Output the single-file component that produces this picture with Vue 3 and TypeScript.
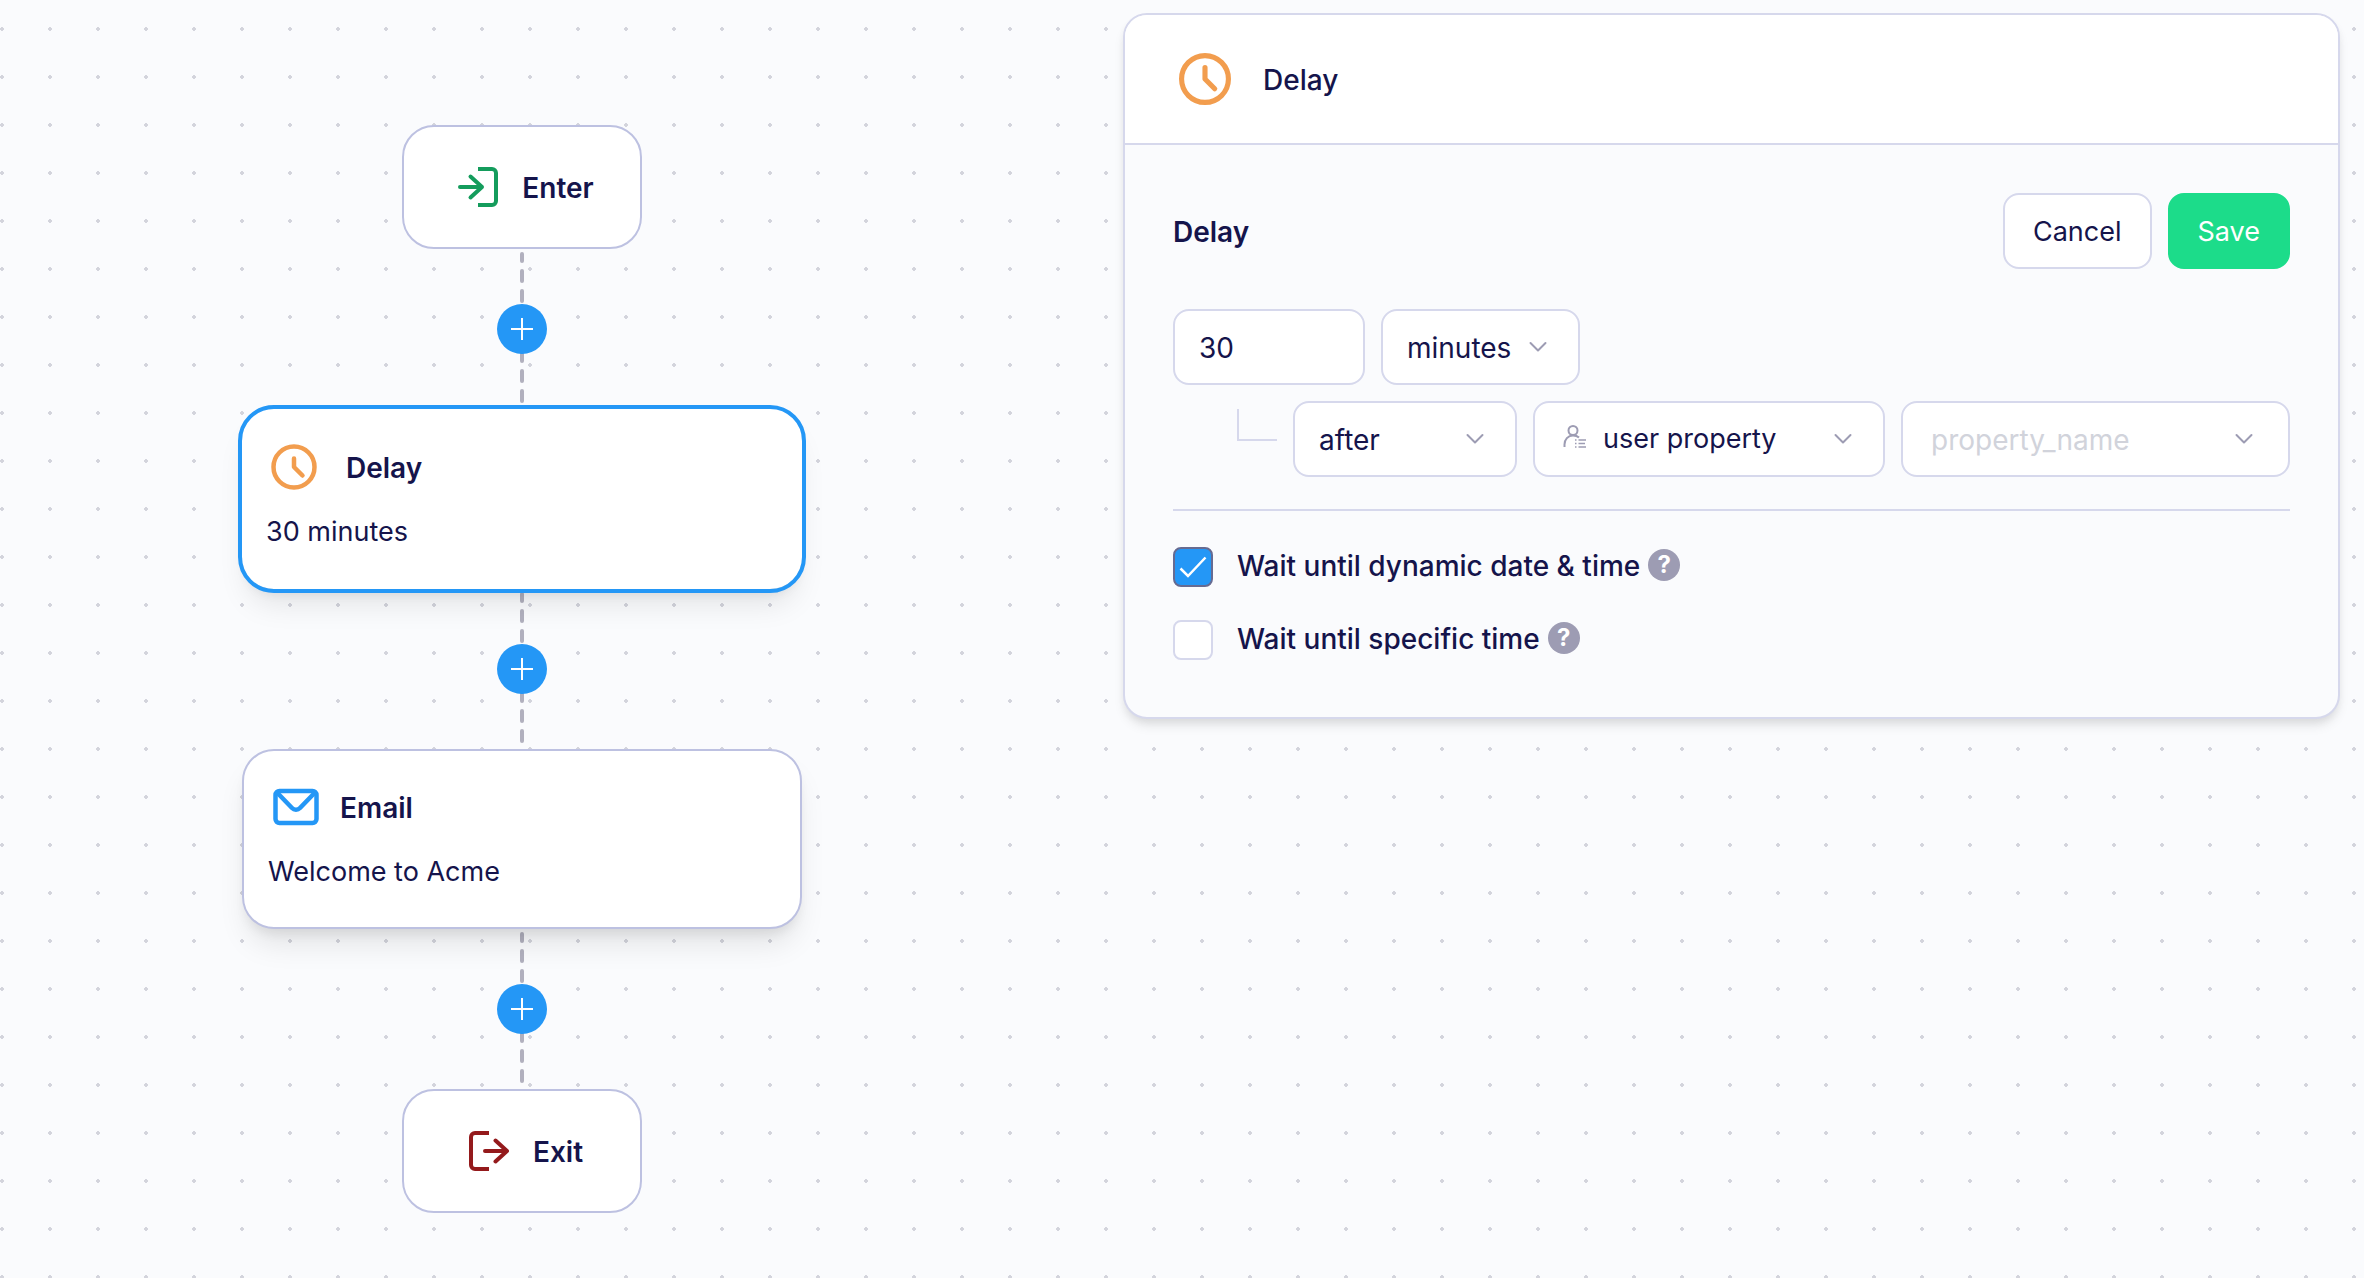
<script setup lang="ts">
import { reactive } from 'vue'

interface DelaySettings {
  amount: string
  unit: string
  relation: string
  source: string
  property: string
  untilDynamic: boolean
  untilSpecific: boolean
}

const settings = reactive<DelaySettings>({
  amount: '30',
  unit: 'minutes',
  relation: 'after',
  source: 'user property',
  property: '',
  untilDynamic: true,
  untilSpecific: false,
})
</script>

<template>
  <main class="workspace">
    <section class="flow" aria-label="Journey">
      <article class="node terminal">
        <svg class="terminal-icon enter" viewBox="0 0 48 48" aria-hidden="true">
          <path d="M28 6h14a4 4 0 0 1 4 4v28a4 4 0 0 1-4 4H28" />
          <path class="round" d="M10 24h22M20.500 13.500L32 24 20.500 34.500" />
        </svg>
        <h2>Enter</h2>
      </article>

      <div class="edge">
        <svg class="wire" viewBox="0 0 4 160" aria-hidden="true"><path d="M2 5V153" /></svg>
        <button type="button" class="add" aria-label="Add step after Enter">
          <svg viewBox="0 0 22 22" aria-hidden="true"><path d="M11 0v22M0 11h22" /></svg>
        </button>
      </div>

      <article class="node step selected">
        <div class="step-title wide">
          <svg class="clock" viewBox="0 0 56 56" aria-hidden="true">
            <circle cx="28" cy="28" r="20.500" />
            <path d="M28 19.500V28l8.500 8.500" />
          </svg>
          <h2>Delay</h2>
        </div>
        <p>30 minutes</p>
      </article>

      <div class="edge">
        <svg class="wire" viewBox="0 0 4 160" aria-hidden="true"><path d="M2 5V153" /></svg>
        <button type="button" class="add" aria-label="Add step after Delay">
          <svg viewBox="0 0 22 22" aria-hidden="true"><path d="M11 0v22M0 11h22" /></svg>
        </button>
      </div>

      <article class="node step">
        <div class="step-title">
          <svg class="mail" viewBox="0 0 56 56" aria-hidden="true">
            <rect x="7.500" y="12" width="41" height="32" rx="4" />
            <path d="M9 13.500l15 15.500a5.500 5.500 0 0 0 8 0l15-15.500" />
          </svg>
          <h2>Email</h2>
        </div>
        <p>Welcome to Acme</p>
      </article>

      <div class="edge">
        <svg class="wire" viewBox="0 0 4 160" aria-hidden="true"><path d="M2 5V153" /></svg>
        <button type="button" class="add" aria-label="Add step after Email">
          <svg viewBox="0 0 22 22" aria-hidden="true"><path d="M11 0v22M0 11h22" /></svg>
        </button>
      </div>

      <article class="node terminal">
        <svg class="terminal-icon exit" viewBox="0 0 48 48" aria-hidden="true">
          <path d="M28 6H14a4 4 0 0 0-4 4v28a4 4 0 0 0 4 4h14" />
          <path class="round" d="M24 24h22M34.500 13.500L46 24 34.500 34.500" />
        </svg>
        <h2>Exit</h2>
      </article>
    </section>

    <aside class="panel" aria-label="Delay settings">
      <header class="panel-header">
        <svg class="clock" viewBox="0 0 56 56" aria-hidden="true">
          <circle cx="28" cy="28" r="20.500" />
          <path d="M28 18v10l8.500 8.500" />
        </svg>
        <h1>Delay</h1>
      </header>

      <form class="panel-body" @submit.prevent>
        <div class="section-bar">
          <h2>Delay</h2>
          <div class="actions">
            <button type="button" class="btn">Cancel</button>
            <button type="submit" class="btn primary">Save</button>
          </div>
        </div>

        <div class="duration">
          <input v-model="settings.amount" class="control" type="text" inputmode="numeric" aria-label="Amount" />
          <div class="picker">
            <select v-model="settings.unit" class="control" aria-label="Unit">
              <option>minutes</option>
              <option>hours</option>
              <option>days</option>
            </select>
            <svg class="chevron" viewBox="0 0 20 12" aria-hidden="true"><path d="M2.500 2l7.500 7.500L17.500 2" /></svg>
          </div>
        </div>

        <div class="anchor">
          <span class="branch"></span>
          <div class="picker">
            <select v-model="settings.relation" class="control" aria-label="Relation">
              <option>after</option>
              <option>before</option>
            </select>
            <svg class="chevron" viewBox="0 0 20 12" aria-hidden="true"><path d="M2.500 2l7.500 7.500L17.500 2" /></svg>
          </div>
          <div class="picker with-icon">
            <svg class="person" viewBox="0 0 24 24" aria-hidden="true">
              <circle cx="10" cy="5.500" r="4.500" />
              <path d="M1.500 22v-2.500C1.500 14.500 5 10.500 10 10.500c2.500 0 4.500 .6 6 2" />
              <path class="list" d="M12 15h1.500M15.500 15H23M12 18.500h1.500M15.500 18.500H22M12 22h1.500M15.500 22H23" />
            </svg>
            <select v-model="settings.source" class="control" aria-label="Source">
              <option>user property</option>
              <option>event property</option>
            </select>
            <svg class="chevron" viewBox="0 0 20 12" aria-hidden="true"><path d="M2.500 2l7.500 7.500L17.500 2" /></svg>
          </div>
          <div class="picker roomy">
            <select v-model="settings.property" class="control" :class="{ empty: !settings.property }" aria-label="Property">
              <option value="" disabled>property_name</option>
              <option>signed_up_at</option>
            </select>
            <svg class="chevron" viewBox="0 0 20 12" aria-hidden="true"><path d="M2.500 2l7.500 7.500L17.500 2" /></svg>
          </div>
        </div>

        <div class="conditions">
          <div class="condition">
            <span class="tick">
              <input id="until-dynamic" v-model="settings.untilDynamic" type="checkbox" />
              <svg viewBox="0 0 40 40" aria-hidden="true"><path d="M7.500 21.500L15 29l17.500-18.500" /></svg>
            </span>
            <label for="until-dynamic">Wait until dynamic date &amp; time</label>
            <button type="button" class="help" aria-label="About dynamic date and time">?</button>
          </div>
          <div class="condition">
            <span class="tick">
              <input id="until-specific" v-model="settings.untilSpecific" type="checkbox" />
              <svg viewBox="0 0 40 40" aria-hidden="true"><path d="M7.500 21.500L15 29l17.500-18.500" /></svg>
            </span>
            <label for="until-specific">Wait until specific time</label>
            <button type="button" class="help" aria-label="About specific time">?</button>
          </div>
        </div>
      </form>
    </aside>
  </main>
</template>

<style>
body {
  margin: 0;
  background: #fafbfd;
}
</style>

<style scoped>
* {
  box-sizing: border-box;
}

.workspace {
  display: flex;
  align-items: flex-start;
  gap: 79px;
  min-height: 100vh;
  padding: 13px 24px 64px 0;
  background-color: #fafbfd;
  background-image: radial-gradient(circle, #d3d4dc 1px, #d5d6de 2px, transparent 2px);
  background-size: 48px 48px;
  background-position: -22px 5px;
  color: #15144b;
  font-family: Inter, "Liberation Sans", sans-serif;
  font-size: 28px;
  line-height: 34px;
}

h1,
h2,
p {
  margin: 0;
  font-size: 28px;
}

h1,
h2 {
  padding-top: 2px;
}

h1 {
  font-weight: 500;
}

h2 {
  font-weight: 600;
}

button {
  padding: 0;
  border: 0;
  font: inherit;
  cursor: pointer;
}

svg {
  display: block;
  flex: none;
  fill: none;
}

/* Journey column */
.flow {
  display: flex;
  flex: 0 1 1044px;
  flex-direction: column;
  align-items: center;
  padding-top: 112px;
}

.node {
  position: relative;
  z-index: 1;
  border: 2px solid #bdc1e1;
  border-radius: 32px;
  background: #fff;
}

.terminal {
  display: flex;
  align-items: center;
  justify-content: center;
  gap: 24px;
  width: 240px;
  height: 124px;
}

.terminal-icon {
  width: 48px;
  height: 48px;
  stroke-width: 4;
}

.terminal-icon .round {
  stroke-linecap: round;
  stroke-linejoin: round;
}

.enter {
  stroke: #149c5c;
}

.exit {
  stroke: #941a1c;
}

.step {
  display: flex;
  flex-direction: column;
  gap: 20px;
  width: 560px;
  padding: 28px 24px 38px;
  box-shadow: 0 20px 30px -6px rgba(0, 0, 0, 0.1), 0 8px 12px -4px rgba(0, 0, 0, 0.08);
}

.step p {
  font-size: 27px;
}

.selected {
  padding: 30px 24px 40px;
  border: 0;
  outline: 4px solid #2497f6;
}

.step-title {
  display: flex;
  align-items: center;
  gap: 16px;
}

.step-title.wide {
  gap: 24px;
}

.step-title svg {
  width: 56px;
  height: 56px;
}

.clock {
  stroke: #f29d4e;
  stroke-width: 4.5;
  stroke-linecap: round;
  stroke-linejoin: round;
}

.mail {
  stroke: #2497f6;
  stroke-width: 4.5;
}

.edge {
  display: grid;
  justify-items: center;
  height: 160px;
}

.wire,
.add {
  grid-area: 1 / 1;
}

.wire {
  width: 4px;
  height: 160px;
  stroke: #b1b0be;
  stroke-width: 4;
  stroke-linecap: round;
  stroke-dasharray: 10 10;
  stroke-dashoffset: 3;
}

.add {
  z-index: 2;
  display: grid;
  place-items: center;
  align-self: center;
  width: 50px;
  height: 50px;
  border-radius: 50%;
  background: #2497f6;
}

.add svg {
  width: 22px;
  height: 22px;
  stroke: #fff;
  stroke-width: 2;
}

/* Settings panel */
.panel {
  flex: 1 1 0;
  min-width: 0;
  overflow: hidden;
  border: 2px solid #d6d8ec;
  border-radius: 24px;
  background: #fafbfd;
  box-shadow: 0 8px 12px -2px rgba(0, 0, 0, 0.1), 0 4px 8px -2px rgba(0, 0, 0, 0.06);
}

.panel-header {
  display: flex;
  align-items: center;
  gap: 26px;
  padding: 32px 48px;
  border-bottom: 2px solid #d6d8ec;
  background: #fff;
}

.panel-header .clock {
  width: 64px;
  height: 64px;
}

.panel-body {
  padding: 48px 48px 57px;
}

.section-bar {
  display: flex;
  align-items: center;
  justify-content: space-between;
  margin-bottom: 40px;
}

.actions {
  display: flex;
  gap: 16px;
}

.btn {
  height: 76px;
  padding: 2px 28px 0;
  border: 2px solid #d6d8ec;
  border-radius: 16px;
  background: #fff;
  color: inherit;
  font-size: 27px;
}

.btn.primary {
  border-color: #1cdc8a;
  background: #1cdc8a;
  color: #fff;
}

.control {
  display: block;
  width: 100%;
  height: 76px;
  padding: 2px 24px 0;
  border: 2px solid #d6d8ec;
  border-radius: 16px;
  background: #fff;
  color: inherit;
  font: inherit;
  appearance: none;
}

.duration {
  display: grid;
  grid-template-columns: 192px 199px;
  gap: 16px;
}

.anchor {
  display: grid;
  grid-template-columns: 104px 224px 352px minmax(0, 1fr);
  gap: 16px;
  margin-top: 16px;
  padding-bottom: 32px;
  border-bottom: 2px solid #d6d8ec;
}

.branch {
  width: 40px;
  height: 32px;
  margin: 8px 0 0 64px;
  border: solid #d6d8ec;
  border-width: 0 0 2px 2px;
}

.picker {
  position: relative;
}

.chevron {
  position: absolute;
  top: 32px;
  right: 32px;
  width: 20px;
  height: 12px;
  stroke: #9d9cb3;
  stroke-width: 2;
  stroke-linecap: round;
  stroke-linejoin: round;
  pointer-events: none;
}

.person {
  position: absolute;
  top: 24px;
  left: 30px;
  width: 24px;
  height: 24px;
  stroke: #9d9cb3;
  stroke-width: 2;
  pointer-events: none;
}

.person .list {
  stroke-width: 1.5;
}

.with-icon .control {
  padding: 0 24px 0 68px;
  font-size: 27px;
}

.roomy .control {
  padding-left: 28px;
}

.roomy .chevron {
  right: 36px;
}

.control.empty {
  color: #d1d3db;
}

.conditions {
  display: grid;
  gap: 33px;
  padding-top: 36px;
}

.condition {
  display: flex;
  align-items: flex-start;
}

.tick {
  display: grid;
  margin-right: 24px;
}

.tick input,
.tick svg {
  grid-area: 1 / 1;
  width: 40px;
  height: 40px;
}

.tick input {
  margin: 0;
  border: 2px solid #d6d8ec;
  border-radius: 8px;
  background: #fff;
  appearance: none;
}

.tick input:checked {
  border-color: #666b92;
  background: #2497f6;
}

.tick svg {
  stroke: #fff;
  stroke-width: 2.5;
  visibility: hidden;
  pointer-events: none;
}

.tick input:checked + svg {
  visibility: visible;
}

.condition label {
  font-weight: 500;
  line-height: 38px;
}

.help {
  width: 32px;
  height: 32px;
  margin: 2px 0 0 8px;
  border-radius: 50%;
  background: #9d9cb3;
  color: #fff;
  font-size: 24px;
  font-weight: 700;
  line-height: 32px;
}
</style>
